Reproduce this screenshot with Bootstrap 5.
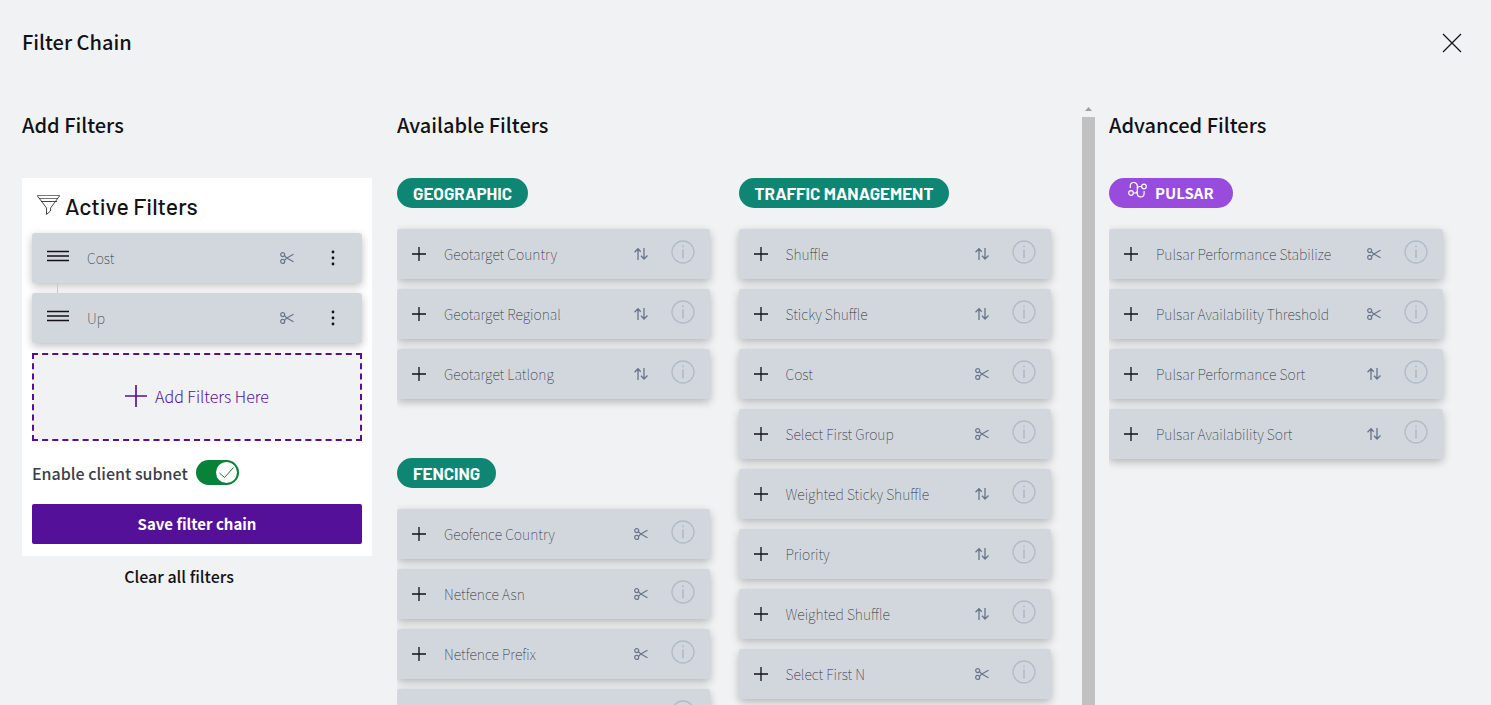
<!DOCTYPE html>
<html lang="en">
<head>
<meta charset="utf-8">
<meta name="viewport" content="width=device-width, initial-scale=1">
<title>Filter Chain</title>
<link href="https://cdn.jsdelivr.net/npm/bootstrap@5.3.0/dist/css/bootstrap.min.css" rel="stylesheet">
<style>
  body { background: #f0f2f4; color: #121217; font-family: "Source Sans Pro", "Noto Sans CJK SC", "Open Sans", sans-serif; font-size: 15px; line-height: 20px; }
  .page-head { padding: 26px 28px 0 22px; height: 107px; }
  .title-text { font-size: 20px; line-height: 32px; font-weight: 500; margin: 0; }
  .close-btn { width: 22px; height: 34px; }
  .board { display: grid; grid-template-columns: 350px minmax(0, 698fr) minmax(0, 337fr); padding-left: 22px; padding-right: 34px; column-gap: 25px; }
  .board-head { margin: 2px 0 37px; }
  .mid-pane { overflow: hidden; }
  .mid-body { padding-right: 31px; }
  .group-grid { display: grid; grid-template-columns: 1fr 1fr; gap: 29px; }
  .group-gap { margin-bottom: 59px; }
  .track { width: 13px; flex: none; }
  .thumb { background: #c1c1c1; }
  .track-arrow { height: 10px; }
  .right-pane { overflow: hidden; margin-left: -11px; padding-right: 14px; }
  .pill { height: 30px; padding: 0 16px; border-radius: 15px; background: #0f8673; color: #fff; font-family: Barlow, "Roboto", sans-serif; font-size: 17px; line-height: 30px; font-weight: 700; margin: 0 0 21px; }
  .pill-pulsar { background: #984bdc; font-family: inherit; font-size: 15px; padding: 0 19px; }
  .filter-item { height: 50px; background: #d2d7de; border-radius: 3px; box-shadow: 0 3px 8px rgba(0, 0, 0, .25); margin-bottom: 10px; padding: 0 15px 0 14px; }
  .filter-name { font-size: 14px; font-weight: 100; color: #30333a; }
  .icon-btn { border: 0; background: none; padding: 0; display: block; color: #121217; flex: none; }
  .icon-btn svg, .kind { display: block; flex: none; }
  .add-btn { width: 16px; margin-right: 17px; }
  .kind { color: #68758a; margin-right: 22px; }
  .info-btn { color: #b4bbc8; margin-bottom: 5px; }
  .active-card { background: #fff; padding: 12px 10px; }
  .active-title { font-family: Barlow, "Roboto", sans-serif; font-size: 23px; line-height: 32px; font-weight: 500; margin: 0 0 11px; padding-left: 5px; }
  .active-list { position: relative; }
  .link-line { position: absolute; left: 25px; top: 50px; width: 1px; height: 10px; background: #c8c8c8; }
  .drag-btn { width: 22px; margin-right: 18px; margin-bottom: 4px; }
  .active-list .kind { margin-right: 32px; }
  .active-list .filter-item { padding-left: 15px; }
  .drop-zone { height: 88px; border: 2px dashed #551099; background: #f0f2f4; color: #551099; font-size: 16px; font-weight: 300; padding-bottom: 4px; }
  .subnet { height: 63px; font-size: 16px; font-weight: 500; color: #3b4048; }
  .switch { appearance: none; width: 43px; height: 25px; border-radius: 13px; margin: 0; background: #c1c1c1; }
  .switch:checked { background: #078238 url("data:image/svg+xml,%3Csvg xmlns='http://www.w3.org/2000/svg' viewBox='0 0 43 25'%3E%3Ccircle cx='30.500' cy='12.500' r='10.500' fill='white'/%3E%3Cpath d='M23.500 13l5 4.500 9-10' fill='none' stroke='%23078238'/%3E%3C/svg%3E") center / 43px 25px no-repeat; }
  .save-btn { height: 40px; border-radius: 2px; background: #551099; color: #fff; font-size: 15px; font-weight: 700; padding: 0; }
  .save-btn:hover { background: #430b7b; color: #fff; }
  .clear-btn { color: #121217; font-size: 16px; line-height: 20px; font-weight: 500; padding: 0; margin-top: 10px; margin-right: 36px; }
</style>
</head>
<body>
<svg class="d-none" aria-hidden="true">
  <symbol id="plus" viewBox="0 0 16 16"><path d="M8 1v14M1 8h14" fill="none" stroke="currentColor" stroke-width="1.300"/></symbol>
  <symbol id="sort" viewBox="0 0 16 16"><path d="M5 14V3M1.500 6.200L5 2.700l2.700 3M11 2v11M8 9.800l3 3.200 3.500-3.500" fill="none" stroke="currentColor" stroke-width="1.300"/></symbol>
  <symbol id="cut" viewBox="0 0 16 16"><g fill="none" stroke="currentColor" stroke-width="1.200"><circle cx="3.700" cy="4.600" r="2"/><circle cx="3.700" cy="11.400" r="2"/><path d="M5.500 5.700L7.800 8l-2.300 2.300M7.800 8L14.500 4.300M7.800 8l6.700 3.700"/></g></symbol>
  <symbol id="info" viewBox="0 0 24 24"><circle cx="12" cy="12" r="11" fill="none" stroke="currentColor" stroke-width="1.300"/><path d="M12 9.500v8.700M12 5.500v1.700" fill="none" stroke="currentColor" stroke-width="1.700"/></symbol>
  <symbol id="bars" viewBox="0 0 22 12"><path d="M0 1.500h22M0 6h22M0 10.500h22" fill="none" stroke="currentColor" stroke-width="1.500"/></symbol>
  <symbol id="dots" viewBox="0 0 4 16"><g fill="currentColor"><circle cx="2" cy="2" r="1.400"/><circle cx="2" cy="8" r="1.400"/><circle cx="2" cy="14" r="1.400"/></g></symbol>
</svg>

<div class="vh-100 d-flex flex-column overflow-hidden">
  <header class="page-head flex-shrink-0 d-flex justify-content-between align-items-start">
    <h1 class="title-text">Filter Chain</h1>
    <button type="button" class="icon-btn close-btn" aria-label="Close"><svg width="22" height="34" viewBox="0 0 22 34"><path d="M2 8l18 18M20 8L2 26" fill="none" stroke="currentColor" stroke-width="1.200"/></svg></button>
  </header>

  <main class="board flex-grow-1 overflow-hidden">
    <section>
      <h2 class="title-text board-head">Add Filters</h2>
      <div class="active-card">
        <h3 class="active-title d-flex align-items-center gap-1"><svg width="24" height="24" viewBox="0 0 24 24" fill="none" stroke="#333" aria-hidden="true"><path d="M0 1.500h23M2 4.500h19" stroke="#777"/><path d="M4 7.500h16M0.500 2L9.500 14v6.500l4-3.500V14L22.500 2" stroke-width=".9"/></svg>Active Filters</h3>
        <div class="active-list" data-active='[["Cost","cut"],["Up","cut"]]'></div>
        <button type="button" class="drop-zone w-100 d-flex align-items-center justify-content-center gap-2"><svg width="22" height="22" viewBox="0 0 16 16" aria-hidden="true"><path d="M8 0v16M0 8h16" stroke="currentColor" stroke-width="1.200"/></svg>Add Filters Here</button>
        <div class="subnet d-flex align-items-center">
          <label for="subnet" class="me-2">Enable client subnet</label>
          <input type="checkbox" role="switch" id="subnet" class="switch" checked>
        </div>
        <button type="button" class="btn save-btn w-100">Save filter chain</button>
      </div>
      <div class="text-center"><button type="button" class="btn border-0 clear-btn">Clear all filters</button></div>
    </section>

    <section class="mid-pane d-flex">
      <div class="mid-body flex-grow-1">
        <h2 class="title-text board-head">Available Filters</h2>
        <div class="group-grid">
          <div>
            <h3 class="pill d-inline-block">GEOGRAPHIC</h3>
            <div class="group-gap" data-filters='[["Geotarget Country","sort"],["Geotarget Regional","sort"],["Geotarget Latlong","sort"]]'></div>
            <h3 class="pill d-inline-block">FENCING</h3>
            <div data-filters='[["Geofence Country","cut"],["Netfence Asn","cut"],["Netfence Prefix","cut"],["","cut"]]'></div>
          </div>
          <div>
            <h3 class="pill d-inline-block">TRAFFIC MANAGEMENT</h3>
            <div data-filters='[["Shuffle","sort"],["Sticky Shuffle","sort"],["Cost","cut"],["Select First Group","cut"],["Weighted Sticky Shuffle","sort"],["Priority","sort"],["Weighted Shuffle","sort"],["Select First N","cut"]]'></div>
          </div>
        </div>
      </div>
      <div class="track d-flex flex-column" aria-hidden="true">
        <svg class="track-arrow" width="13" height="10" viewBox="0 0 13 10"><path d="M3 4l3.500-4L10 4z" fill="#a0a0a0"/></svg>
        <div class="thumb flex-grow-1"></div>
      </div>
    </section>

    <section class="right-pane">
      <h2 class="title-text board-head">Advanced Filters</h2>
      <h3 class="pill pill-pulsar d-inline-flex"><svg class="me-2" width="19" height="24" viewBox="0 0 19 24" fill="none" stroke="currentColor" stroke-width="1.200" aria-hidden="true"><circle cx="3" cy="15" r="2.300"/><circle cx="16" cy="8.500" r="2.300"/><path d="M5.200 15h1.600q2.500 0 2.500-2.500V8a3.500 3.500 0 0 0-7 0v2M13.700 8.500h-2q-2.400 0-2.400 2.500v4.500a3.400 3.400 0 0 0 6.800 0V13"/></svg>PULSAR</h3>
      <div data-filters='[["Pulsar Performance Stabilize","cut"],["Pulsar Availability Threshold","cut"],["Pulsar Performance Sort","sort"],["Pulsar Availability Sort","sort"]]'></div>
    </section>
  </main>
</div>

<script src="https://cdn.jsdelivr.net/npm/bootstrap@5.3.0/dist/js/bootstrap.bundle.min.js"></script>
<script>
  const icon = (id, w, h) => `<svg width="${w}" height="${h}" aria-hidden="true"><use href="#${id}"/></svg>`;
  const kind = id => `<svg class="kind" width="16" height="16" aria-hidden="true"><use href="#${id}"/></svg>`;
  document.querySelectorAll('[data-filters]').forEach(box => {
    box.innerHTML = JSON.parse(box.dataset.filters).map(([name, type]) => `
      <div class="filter-item d-flex align-items-center">
        <button type="button" class="icon-btn add-btn" aria-label="Add ${name}">${icon('plus', 16, 16)}</button>
        <span class="filter-name flex-grow-1 text-nowrap">${name}</span>${kind(type)}
        <button type="button" class="icon-btn info-btn" aria-label="About ${name}">${icon('info', 24, 24)}</button>
      </div>`).join('');
  });
  document.querySelectorAll('[data-active]').forEach(box => {
    box.innerHTML = JSON.parse(box.dataset.active).map(([name, type]) => `
      <div class="filter-item d-flex align-items-center">
        <button type="button" class="icon-btn drag-btn" aria-label="Move ${name}">${icon('bars', 22, 12)}</button>
        <span class="filter-name flex-grow-1">${name}</span>${kind(type)}
        <button type="button" class="icon-btn me-2 px-1" aria-label="Options for ${name}">${icon('dots', 4, 16)}</button>
      </div>`).join('') + '<span class="link-line"></span>';
  });
</script>
</body>
</html>
